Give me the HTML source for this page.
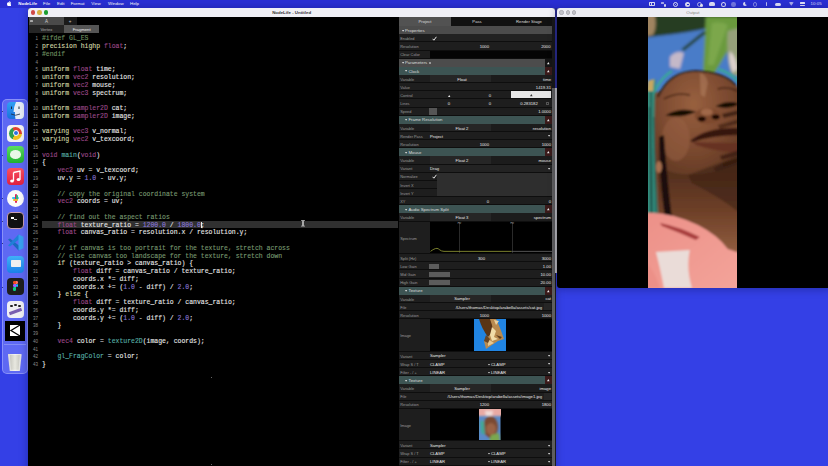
<!DOCTYPE html><html><head><meta charset="utf-8"><style>
*{margin:0;padding:0;box-sizing:border-box}
html,body{width:828px;height:466px;overflow:hidden;background:#3440e6;font-family:"Liberation Sans",sans-serif}
.a{position:absolute}
.t{position:absolute;white-space:pre;line-height:1}
.code{font-family:"Liberation Mono",monospace;font-weight:normal;-webkit-text-stroke:0.12px currentColor}
</style></head><body>
<div class="a" style="left:0;top:0;width:828px;height:7.6px;background:#2a2fd4"></div>
<svg class="a" style="left:7.1px;top:1.3px" width="4.4" height="5.2" viewBox="0 0 17 20"><path fill="#fff" d="M14 10.6c0-2.6 2.1-3.8 2.2-3.9-1.2-1.8-3.1-2-3.7-2-1.6-.2-3.1.9-3.9.9-.8 0-2-.9-3.4-.9C3.5 4.8 1.8 5.8.9 7.4c-1.9 3.2-.5 8 1.3 10.6.9 1.3 2 2.7 3.3 2.7 1.3-.1 1.8-.9 3.4-.9s2 .9 3.4.8c1.4 0 2.3-1.3 3.2-2.6 1-1.5 1.4-2.9 1.4-3-.1 0-2.9-1.1-2.9-4.4zM11.4 3c.7-.9 1.2-2 1.1-3.2-1 0-2.3.7-3 1.6-.7.8-1.2 2-1.1 3.1 1.1.1 2.3-.6 3-1.5z"/></svg>
<div class="t" style="left:18.3px;top:2.3px;font-size:4.4px;color:#fff;font-weight:bold">NodeLife</div>
<div class="t" style="left:43.0px;top:2.3px;font-size:4.4px;color:#fff;font-weight:normal">File</div>
<div class="t" style="left:57.0px;top:2.3px;font-size:4.4px;color:#fff;font-weight:normal">Edit</div>
<div class="t" style="left:70.7px;top:2.3px;font-size:4.4px;color:#fff;font-weight:normal">Format</div>
<div class="t" style="left:91.3px;top:2.3px;font-size:4.4px;color:#fff;font-weight:normal">View</div>
<div class="t" style="left:108.0px;top:2.3px;font-size:4.4px;color:#fff;font-weight:normal">Window</div>
<div class="t" style="left:130.0px;top:2.3px;font-size:4.4px;color:#fff;font-weight:normal">Help</div>
<div class="a" style="left:648.6px;top:2.3px;width:6.5px;height:3.8px;border:0.7px solid rgba(255,255,255,.85);border-radius:0.8px"></div>
<div class="a" style="left:650.5px;top:3.3px;width:1.8px;height:1.8px;background:rgba(255,255,255,.85)"></div>
<div class="a" style="left:661px;top:2.4px;width:2.5px;height:1.8px;background:rgba(255,255,255,.6);border-radius:0.5px"></div>
<div class="a" style="left:663.5px;top:4px;width:2.6px;height:2.6px;background:rgba(255,255,255,.85);border-radius:50%"></div>
<div class="a" style="left:672.8px;top:1.8px;width:5px;height:5px;border:0.9px solid rgba(255,255,255,.85);border-radius:50%"></div>
<div class="a" style="left:674.6px;top:3.6px;width:1.4px;height:1.4px;background:rgba(255,255,255,.85);border-radius:50%"></div>
<div class="a" style="left:685px;top:1.8px;width:5.2px;height:5.2px;background:rgba(255,255,255,.85);border-radius:50%"></div>
<div class="a" style="left:686.8px;top:3.8px;width:1.8px;height:1.2px;background:#2a2fd4"></div>
<div class="a" style="left:697.2px;top:1.8px;width:5px;height:5px;border:0.9px solid rgba(255,255,255,.6);border-radius:50%"></div>
<div class="a" style="left:700.3px;top:4.3px;width:2.4px;height:2.4px;background:rgba(255,255,255,.85);border-radius:50%"></div>
<div class="a" style="left:709.2px;top:2.2px;width:5.6px;height:4px;background:rgba(255,255,255,.85);border-radius:2px 2px 1px 1px"></div>
<div class="a" style="left:720.8px;top:1.8px;width:4.8px;height:5px;border:0.8px solid rgba(255,255,255,.85);border-radius:50%"></div>
<div class="a" style="left:731px;top:2px;width:4.6px;height:4.6px;background:rgba(255,255,255,.35);border-radius:50%"></div>
<div class="a" style="left:743px;top:2px;width:4.4px;height:4.4px;background:rgba(255,255,255,.85);border-radius:50%"></div>
<div class="a" style="left:744.6px;top:1.2px;width:4px;height:4px;background:#2a2fd4;border-radius:50%"></div>
<div class="a" style="left:752.6px;top:2px;width:4.6px;height:4.6px;border:0.8px solid rgba(255,255,255,.4);border-radius:50%"></div>
<div class="a" style="left:766.3px;top:2px;width:1.1px;height:4.2px;background:rgba(255,255,255,.7);border-radius:0.5px"></div>
<div class="a" style="left:775.3px;top:2.6px;width:6px;height:3px;background:rgba(255,255,255,.85);border-radius:1.5px"></div>
<svg class="a" style="left:789px;top:2.2px" width="4.6" height="3.8" viewBox="0 0 10 8"><path d="M0 1 Q5 -1.5 10 1 L5 8 Z" fill="rgba(255,255,255,.6)"/></svg>
<div class="a" style="left:800px;top:2.3px;width:5px;height:1.6px;background:rgba(255,255,255,.85);border-radius:0.5px"></div>
<div class="a" style="left:800px;top:4.6px;width:5px;height:1.6px;background:rgba(255,255,255,.85);border-radius:0.5px"></div>
<div class="t" style="left:810.6px;top:2.2px;font-size:4.4px;color:rgba(255,255,255,.85)">10:05</div>
<div class="a" style="left:1.7px;top:98.5px;width:26px;height:275px;border-radius:5px;background:rgba(135,145,255,.5);border:0.5px solid rgba(190,195,255,.45)"></div>
<div class="a" style="left:7.0px;top:102.0px;width:17.0px;height:17.0px;border-radius:4.0px;background:linear-gradient(#30a0f4,#1a70dc);overflow:hidden;"><svg width="17" height="17" viewBox="0 0 17 17"><path d="M9 0 H17 V17 H8.5 Q7.5 13 8 10 H6.5 Q7 4 9 0 Z" fill="#e6ecf6"/><path d="M4.5 4.5 V7 M12 4.5 V7" stroke="#1a2a40" stroke-width="1"/><path d="M4 12 Q8.5 14.5 13 12" stroke="#1a2a40" stroke-width="0.8" fill="none"/></svg></div>
<div class="a" style="left:7.0px;top:124.5px;width:17.0px;height:17.0px;border-radius:4.0px;background:#f4f4f4;overflow:hidden;"><div class="a" style="left:2px;top:2px;width:13px;height:13px;border-radius:50%;background:conic-gradient(from -30deg,#e04030 0 120deg,#f0c020 120deg 240deg,#30a050 240deg 360deg)"></div><div class="a" style="left:5.5px;top:5.5px;width:6px;height:6px;border-radius:50%;background:#2a70e0;border:1.2px solid #fff"></div></div>
<div class="a" style="left:7.0px;top:146.4px;width:17.0px;height:17.0px;border-radius:4.0px;background:linear-gradient(#5ae060,#20b030);overflow:hidden;"><div class="a" style="left:3px;top:4px;width:11px;height:8.5px;border-radius:50%;background:#e8f8e8"></div></div>
<div class="a" style="left:7.0px;top:168.3px;width:17.0px;height:17.0px;border-radius:4.0px;background:linear-gradient(#fa5060,#e02040);overflow:hidden;"><svg width="17" height="17" viewBox="0 0 17 17"><path d="M6.5 4.5 L13 3 V11.5" stroke="#fff" stroke-width="1.3" fill="none"/><path d="M6.5 4.5 V13" stroke="#fff" stroke-width="1.3"/><ellipse cx="5" cy="13" rx="1.9" ry="1.5" fill="#fff"/><ellipse cx="11.5" cy="11.6" rx="1.9" ry="1.5" fill="#fff"/></svg></div>
<div class="a" style="left:7.0px;top:189.5px;width:17.0px;height:17.0px;border-radius:8.5px;background:#fafafa;overflow:hidden;"><div class="a" style="left:5px;top:7px;width:7px;height:2.2px;background:#36c5f0;border-radius:1px"></div><div class="a" style="left:7.5px;top:4px;width:2.2px;height:9px;background:#e01e5a;border-radius:1px"></div><div class="a" style="left:9px;top:5px;width:2.2px;height:5px;background:#2eb67d;border-radius:1px"></div><div class="a" style="left:5.5px;top:9px;width:5px;height:2px;background:#ecb22e;border-radius:1px"></div></div>
<div class="a" style="left:7.0px;top:212.2px;width:17.0px;height:17.0px;border-radius:4.0px;background:#111;overflow:hidden;border:0.8px solid #c9a0b0"><div class="a" style="left:3px;top:4px;width:2.5px;height:2px;background:#fff"></div><div class="a" style="left:6px;top:6px;width:2.5px;height:1px;background:#ccc"></div></div>
<div class="a" style="left:7.0px;top:234.0px;width:17.0px;height:17.0px;border-radius:4.0px;background:transparent;overflow:hidden;"><svg width="17" height="17" viewBox="0 0 17 17"><path d="M1 5.5 L3 4.5 L12.5 12 V16 L11.5 16.5 Z" fill="#1a6ac0"/><path d="M1 11.5 L3 12.5 L12.5 5 V1 L11.5 0.5 Z" fill="#2080d8"/><path d="M11.5 0.5 L16.5 2.8 V14.2 L11.5 16.5 Z" fill="#38a0f0"/></svg></div>
<div class="a" style="left:7.0px;top:255.5px;width:17.0px;height:17.0px;border-radius:4.0px;background:linear-gradient(#40b0f8,#1a80e8);overflow:hidden;"><div class="a" style="left:3.5px;top:4.5px;width:10px;height:6.5px;background:#f0f0f0;border-radius:0.8px"></div></div>
<div class="a" style="left:7.0px;top:278.0px;width:17.0px;height:17.0px;border-radius:4.0px;background:#1e1e1e;overflow:hidden;"><div class="a" style="left:6px;top:3px;width:2.6px;height:3.2px;background:#f24e1e;border-radius:1.3px 0 0 1.3px"></div><div class="a" style="left:8.6px;top:3px;width:2.6px;height:3.2px;background:#ff7262;border-radius:0 1.3px 1.3px 0"></div><div class="a" style="left:6px;top:6.2px;width:2.6px;height:3.2px;background:#a259ff;border-radius:1.3px 0 0 1.3px"></div><div class="a" style="left:8.6px;top:6.2px;width:2.6px;height:3.2px;background:#1abcfe;border-radius:50%"></div><div class="a" style="left:6px;top:9.4px;width:2.6px;height:3.2px;background:#0acf83;border-radius:1.3px 0 1.3px 1.3px"></div></div>
<div class="a" style="left:7.0px;top:300.5px;width:17.0px;height:17.0px;border-radius:4.0px;background:#f0f0f4;overflow:hidden;"><div class="a" style="left:3px;top:4px;width:2.5px;height:2.5px;border-radius:50%;background:#222"></div><div class="a" style="left:7px;top:3px;width:2.5px;height:2.5px;border-radius:50%;background:#222"></div><div class="a" style="left:11px;top:4px;width:2.5px;height:2.5px;border-radius:50%;background:#222"></div><div class="a" style="left:2px;top:9px;width:13px;height:3px;background:#7a60b0;transform:rotate(-20deg)"></div></div>
<div class="a" style="left:5.0px;top:321.3px;width:20.0px;height:19.3px;border-radius:0.0px;background:#000;overflow:hidden;"><svg width="20" height="19.3" viewBox="0 0 20 19.3"><path d="M5 4 H15 V15 H5 Z" fill="#fff"/><path d="M15 4 L6 9.5 L15 15" stroke="#000" stroke-width="1.3" fill="none"/></svg></div>
<div class="a" style="left:4px;top:344.3px;width:21.5px;height:0.5px;background:rgba(220,225,255,.3)"></div>
<div class="a" style="left:7.3px;top:353.5px;width:15.0px;height:17.5px;border-radius:1.0px;background:transparent;overflow:hidden;"><div class="a" style="left:0.5px;top:0;width:14px;height:17.5px;background:linear-gradient(90deg,#d8d8d8,#f4f4f0 50%,#dcdcdc);clip-path:polygon(0 0,100% 0,86% 100%,14% 100%)"></div><div class="a" style="left:2.5px;top:1.2px;width:10px;height:15px;background:linear-gradient(90deg,#c8c8c0,#e8e8e0 50%,#c8c8c0);clip-path:polygon(0 0,100% 0,88% 100%,12% 100%)"></div></div>
<div class="a" style="left:2.4px;top:110.5px;width:1px;height:1px;border-radius:50%;background:rgba(0,0,40,.8)"></div>
<div class="a" style="left:2.4px;top:155.0px;width:1px;height:1px;border-radius:50%;background:rgba(0,0,40,.8)"></div>
<div class="a" style="left:2.4px;top:198.0px;width:1px;height:1px;border-radius:50%;background:rgba(0,0,40,.8)"></div>
<div class="a" style="left:2.4px;top:221.0px;width:1px;height:1px;border-radius:50%;background:rgba(0,0,40,.8)"></div>
<div class="a" style="left:2.4px;top:243.0px;width:1px;height:1px;border-radius:50%;background:rgba(0,0,40,.8)"></div>
<div class="a" style="left:2.4px;top:287.0px;width:1px;height:1px;border-radius:50%;background:rgba(0,0,40,.8)"></div>
<div class="a" style="left:28px;top:8px;width:527.3px;height:470px;border-radius:3px;background:#000;overflow:hidden;box-shadow:0 1px 8px rgba(0,0,50,.35)">
<div class="a" style="left:0;top:0;width:100%;height:9.1px;background:#f0f0f6"></div>
<div class="a" style="left:2.7px;top:2.4px;width:4.4px;height:4.4px;border-radius:50%;background:#d04a48"></div>
<div class="a" style="left:9.2px;top:2.4px;width:4.4px;height:4.4px;border-radius:50%;background:#d8b040"></div>
<div class="a" style="left:15.6px;top:2.4px;width:4.4px;height:4.4px;border-radius:50%;background:#1c9e30"></div>
<div class="t" style="left:0;width:100%;text-align:center;top:2.6px;font-size:4.4px;color:#333;font-weight:bold">NodeLife - Untitled</div>
</div>
<div class="a" style="left:28.9px;top:17.3px;width:34.8px;height:7.6px;background:#4a4a4a"></div>
<div class="a" style="left:63.7px;top:17.3px;width:13.5px;height:7.6px;background:#1a1a1a"></div>
<div class="a" style="left:28.9px;top:24.9px;width:35px;height:8.5px;background:#252525"></div>
<div class="a" style="left:63.9px;top:24.9px;width:35.5px;height:8.5px;background:#555"></div>
<div class="a" style="left:30.4px;top:19.8px;width:2.6px;height:2.6px;border-radius:0.6px;background:#aaa"></div>
<div class="t" style="left:45px;top:19.8px;font-size:4.5px;color:#ccc">A</div>
<div class="t" style="left:68.7px;top:19.6px;font-size:4.5px;color:#ccc">+</div>
<div class="t" style="left:28.9px;width:35px;text-align:center;top:28px;font-size:4.2px;color:#aaa">Vertex</div>
<div class="t" style="left:63.9px;width:35.5px;text-align:center;top:28px;font-size:4.2px;color:#eee">Fragment</div>
<div class="a" style="left:41.6px;top:220.56px;width:356.4px;height:7.76px;background:#303030"></div>
<div class="a" style="left:200.6px;top:221.76px;width:0.8px;height:6px;background:#eee"></div>
<div class="t" style="left:27.9px;width:10px;text-align:right;top:35.32px;font-size:4.5px;line-height:7.76px;color:#8a8a8a;font-family:'Liberation Sans'">1</div>
<div class="t code" style="left:42px;top:35.32px;font-size:6.46px;line-height:7.76px"><span style="color:#6f9060">#ifdef GL_ES</span></div>
<div class="t" style="left:27.9px;width:10px;text-align:right;top:43.08px;font-size:4.5px;line-height:7.76px;color:#8a8a8a;font-family:'Liberation Sans'">2</div>
<div class="t code" style="left:42px;top:43.08px;font-size:6.46px;line-height:7.76px"><span style="color:#d4d8a8">precision highp </span><span style="color:#9c4888">float</span><span style="color:#e6e6e6">;</span></div>
<div class="t" style="left:27.9px;width:10px;text-align:right;top:50.84px;font-size:4.5px;line-height:7.76px;color:#8a8a8a;font-family:'Liberation Sans'">3</div>
<div class="t code" style="left:42px;top:50.84px;font-size:6.46px;line-height:7.76px"><span style="color:#6f9060">#endif</span></div>
<div class="t" style="left:27.9px;width:10px;text-align:right;top:58.60px;font-size:4.5px;line-height:7.76px;color:#8a8a8a;font-family:'Liberation Sans'">4</div>
<div class="t" style="left:27.9px;width:10px;text-align:right;top:66.36px;font-size:4.5px;line-height:7.76px;color:#8a8a8a;font-family:'Liberation Sans'">5</div>
<div class="t code" style="left:42px;top:66.36px;font-size:6.46px;line-height:7.76px"><span style="color:#d4d8a8">uniform </span><span style="color:#9c4888">float </span><span style="color:#e6e6e6">time;</span></div>
<div class="t" style="left:27.9px;width:10px;text-align:right;top:74.12px;font-size:4.5px;line-height:7.76px;color:#8a8a8a;font-family:'Liberation Sans'">6</div>
<div class="t code" style="left:42px;top:74.12px;font-size:6.46px;line-height:7.76px"><span style="color:#d4d8a8">uniform </span><span style="color:#9c4888">vec2 </span><span style="color:#e6e6e6">resolution;</span></div>
<div class="t" style="left:27.9px;width:10px;text-align:right;top:81.88px;font-size:4.5px;line-height:7.76px;color:#8a8a8a;font-family:'Liberation Sans'">7</div>
<div class="t code" style="left:42px;top:81.88px;font-size:6.46px;line-height:7.76px"><span style="color:#d4d8a8">uniform </span><span style="color:#9c4888">vec2 </span><span style="color:#e6e6e6">mouse;</span></div>
<div class="t" style="left:27.9px;width:10px;text-align:right;top:89.64px;font-size:4.5px;line-height:7.76px;color:#8a8a8a;font-family:'Liberation Sans'">8</div>
<div class="t code" style="left:42px;top:89.64px;font-size:6.46px;line-height:7.76px"><span style="color:#d4d8a8">uniform </span><span style="color:#9c4888">vec3 </span><span style="color:#e6e6e6">spectrum;</span></div>
<div class="t" style="left:27.9px;width:10px;text-align:right;top:97.40px;font-size:4.5px;line-height:7.76px;color:#8a8a8a;font-family:'Liberation Sans'">9</div>
<div class="t" style="left:27.9px;width:10px;text-align:right;top:105.16px;font-size:4.5px;line-height:7.76px;color:#8a8a8a;font-family:'Liberation Sans'">10</div>
<div class="t code" style="left:42px;top:105.16px;font-size:6.46px;line-height:7.76px"><span style="color:#d4d8a8">uniform </span><span style="color:#9c4888">sampler2D </span><span style="color:#e6e6e6">cat;</span></div>
<div class="t" style="left:27.9px;width:10px;text-align:right;top:112.92px;font-size:4.5px;line-height:7.76px;color:#8a8a8a;font-family:'Liberation Sans'">11</div>
<div class="t code" style="left:42px;top:112.92px;font-size:6.46px;line-height:7.76px"><span style="color:#d4d8a8">uniform </span><span style="color:#9c4888">sampler2D </span><span style="color:#e6e6e6">image;</span></div>
<div class="t" style="left:27.9px;width:10px;text-align:right;top:120.68px;font-size:4.5px;line-height:7.76px;color:#8a8a8a;font-family:'Liberation Sans'">12</div>
<div class="t" style="left:27.9px;width:10px;text-align:right;top:128.44px;font-size:4.5px;line-height:7.76px;color:#8a8a8a;font-family:'Liberation Sans'">13</div>
<div class="t code" style="left:42px;top:128.44px;font-size:6.46px;line-height:7.76px"><span style="color:#d4d8a8">varying </span><span style="color:#9c4888">vec3 </span><span style="color:#e6e6e6">v_normal;</span></div>
<div class="t" style="left:27.9px;width:10px;text-align:right;top:136.20px;font-size:4.5px;line-height:7.76px;color:#8a8a8a;font-family:'Liberation Sans'">14</div>
<div class="t code" style="left:42px;top:136.20px;font-size:6.46px;line-height:7.76px"><span style="color:#d4d8a8">varying </span><span style="color:#9c4888">vec2 </span><span style="color:#e6e6e6">v_texcoord;</span></div>
<div class="t" style="left:27.9px;width:10px;text-align:right;top:143.96px;font-size:4.5px;line-height:7.76px;color:#8a8a8a;font-family:'Liberation Sans'">15</div>
<div class="t" style="left:27.9px;width:10px;text-align:right;top:151.72px;font-size:4.5px;line-height:7.76px;color:#8a8a8a;font-family:'Liberation Sans'">16</div>
<div class="t code" style="left:42px;top:151.72px;font-size:6.46px;line-height:7.76px"><span style="color:#9c4888">void </span><span style="color:#58b0a8">main</span><span style="color:#e6e6e6">(</span><span style="color:#9c4888">void</span><span style="color:#e6e6e6">)</span></div>
<div class="t" style="left:27.9px;width:10px;text-align:right;top:159.48px;font-size:4.5px;line-height:7.76px;color:#8a8a8a;font-family:'Liberation Sans'">17</div>
<div class="t code" style="left:42px;top:159.48px;font-size:6.46px;line-height:7.76px"><span style="color:#e6e6e6">{</span></div>
<div class="t" style="left:27.9px;width:10px;text-align:right;top:167.24px;font-size:4.5px;line-height:7.76px;color:#8a8a8a;font-family:'Liberation Sans'">18</div>
<div class="t code" style="left:42px;top:167.24px;font-size:6.46px;line-height:7.76px"><span style="color:#e6e6e6">    </span><span style="color:#9c4888">vec2 </span><span style="color:#e6e6e6">uv = v_texcoord;</span></div>
<div class="t" style="left:27.9px;width:10px;text-align:right;top:175.00px;font-size:4.5px;line-height:7.76px;color:#8a8a8a;font-family:'Liberation Sans'">19</div>
<div class="t code" style="left:42px;top:175.00px;font-size:6.46px;line-height:7.76px"><span style="color:#e6e6e6">    uv.y = </span><span style="color:#8a78d8">1.0</span><span style="color:#e6e6e6"> - uv.y;</span></div>
<div class="t" style="left:27.9px;width:10px;text-align:right;top:182.76px;font-size:4.5px;line-height:7.76px;color:#8a8a8a;font-family:'Liberation Sans'">20</div>
<div class="t" style="left:27.9px;width:10px;text-align:right;top:190.52px;font-size:4.5px;line-height:7.76px;color:#8a8a8a;font-family:'Liberation Sans'">21</div>
<div class="t code" style="left:42px;top:190.52px;font-size:6.46px;line-height:7.76px"><span style="color:#789a70">    // copy the original coordinate system</span></div>
<div class="t" style="left:27.9px;width:10px;text-align:right;top:198.28px;font-size:4.5px;line-height:7.76px;color:#8a8a8a;font-family:'Liberation Sans'">22</div>
<div class="t code" style="left:42px;top:198.28px;font-size:6.46px;line-height:7.76px"><span style="color:#e6e6e6">    </span><span style="color:#9c4888">vec2 </span><span style="color:#e6e6e6">coords = uv;</span></div>
<div class="t" style="left:27.9px;width:10px;text-align:right;top:206.04px;font-size:4.5px;line-height:7.76px;color:#8a8a8a;font-family:'Liberation Sans'">23</div>
<div class="t" style="left:27.9px;width:10px;text-align:right;top:213.80px;font-size:4.5px;line-height:7.76px;color:#8a8a8a;font-family:'Liberation Sans'">24</div>
<div class="t code" style="left:42px;top:213.80px;font-size:6.46px;line-height:7.76px"><span style="color:#789a70">    // find out the aspect ratios</span></div>
<div class="t" style="left:27.9px;width:10px;text-align:right;top:221.56px;font-size:4.5px;line-height:7.76px;color:#8a8a8a;font-family:'Liberation Sans'">25</div>
<div class="t code" style="left:42px;top:221.56px;font-size:6.46px;line-height:7.76px"><span style="color:#e6e6e6">    </span><span style="color:#9c4888">float </span><span style="color:#e6e6e6">texture_ratio = </span><span style="color:#8a78d8">1200.0</span><span style="color:#e6e6e6"> / </span><span style="color:#8a78d8">1800.0</span><span style="color:#e6e6e6">;</span></div>
<div class="t" style="left:27.9px;width:10px;text-align:right;top:229.32px;font-size:4.5px;line-height:7.76px;color:#8a8a8a;font-family:'Liberation Sans'">26</div>
<div class="t code" style="left:42px;top:229.32px;font-size:6.46px;line-height:7.76px"><span style="color:#e6e6e6">    </span><span style="color:#9c4888">float </span><span style="color:#e6e6e6">canvas_ratio = resolution.x / resolution.y;</span></div>
<div class="t" style="left:27.9px;width:10px;text-align:right;top:237.08px;font-size:4.5px;line-height:7.76px;color:#8a8a8a;font-family:'Liberation Sans'">27</div>
<div class="t" style="left:27.9px;width:10px;text-align:right;top:244.84px;font-size:4.5px;line-height:7.76px;color:#8a8a8a;font-family:'Liberation Sans'">28</div>
<div class="t code" style="left:42px;top:244.84px;font-size:6.46px;line-height:7.76px"><span style="color:#789a70">    // if canvas is too portrait for the texture, stretch across</span></div>
<div class="t" style="left:27.9px;width:10px;text-align:right;top:252.60px;font-size:4.5px;line-height:7.76px;color:#8a8a8a;font-family:'Liberation Sans'">29</div>
<div class="t code" style="left:42px;top:252.60px;font-size:6.46px;line-height:7.76px"><span style="color:#789a70">    // else canvas too landscape for the texture, stretch down</span></div>
<div class="t" style="left:27.9px;width:10px;text-align:right;top:260.36px;font-size:4.5px;line-height:7.76px;color:#8a8a8a;font-family:'Liberation Sans'">30</div>
<div class="t code" style="left:42px;top:260.36px;font-size:6.46px;line-height:7.76px"><span style="color:#e6e6e6">    </span><span style="color:#d4d8a8">if </span><span style="color:#e6e6e6">(texture_ratio &gt; canvas_ratio) {</span></div>
<div class="t" style="left:27.9px;width:10px;text-align:right;top:268.12px;font-size:4.5px;line-height:7.76px;color:#8a8a8a;font-family:'Liberation Sans'">31</div>
<div class="t code" style="left:42px;top:268.12px;font-size:6.46px;line-height:7.76px"><span style="color:#e6e6e6">        </span><span style="color:#9c4888">float </span><span style="color:#e6e6e6">diff = canvas_ratio / texture_ratio;</span></div>
<div class="t" style="left:27.9px;width:10px;text-align:right;top:275.88px;font-size:4.5px;line-height:7.76px;color:#8a8a8a;font-family:'Liberation Sans'">32</div>
<div class="t code" style="left:42px;top:275.88px;font-size:6.46px;line-height:7.76px"><span style="color:#e6e6e6">        coords.x *= diff;</span></div>
<div class="t" style="left:27.9px;width:10px;text-align:right;top:283.64px;font-size:4.5px;line-height:7.76px;color:#8a8a8a;font-family:'Liberation Sans'">33</div>
<div class="t code" style="left:42px;top:283.64px;font-size:6.46px;line-height:7.76px"><span style="color:#e6e6e6">        coords.x += (</span><span style="color:#8a78d8">1.0</span><span style="color:#e6e6e6"> - diff) / </span><span style="color:#8a78d8">2.0</span><span style="color:#e6e6e6">;</span></div>
<div class="t" style="left:27.9px;width:10px;text-align:right;top:291.40px;font-size:4.5px;line-height:7.76px;color:#8a8a8a;font-family:'Liberation Sans'">34</div>
<div class="t code" style="left:42px;top:291.40px;font-size:6.46px;line-height:7.76px"><span style="color:#e6e6e6">    } </span><span style="color:#d4d8a8">else</span><span style="color:#e6e6e6"> {</span></div>
<div class="t" style="left:27.9px;width:10px;text-align:right;top:299.16px;font-size:4.5px;line-height:7.76px;color:#8a8a8a;font-family:'Liberation Sans'">35</div>
<div class="t code" style="left:42px;top:299.16px;font-size:6.46px;line-height:7.76px"><span style="color:#e6e6e6">        </span><span style="color:#9c4888">float </span><span style="color:#e6e6e6">diff = texture_ratio / canvas_ratio;</span></div>
<div class="t" style="left:27.9px;width:10px;text-align:right;top:306.92px;font-size:4.5px;line-height:7.76px;color:#8a8a8a;font-family:'Liberation Sans'">36</div>
<div class="t code" style="left:42px;top:306.92px;font-size:6.46px;line-height:7.76px"><span style="color:#e6e6e6">        coords.y *= diff;</span></div>
<div class="t" style="left:27.9px;width:10px;text-align:right;top:314.68px;font-size:4.5px;line-height:7.76px;color:#8a8a8a;font-family:'Liberation Sans'">37</div>
<div class="t code" style="left:42px;top:314.68px;font-size:6.46px;line-height:7.76px"><span style="color:#e6e6e6">        coords.y += (</span><span style="color:#8a78d8">1.0</span><span style="color:#e6e6e6"> - diff) / </span><span style="color:#8a78d8">2.0</span><span style="color:#e6e6e6">;</span></div>
<div class="t" style="left:27.9px;width:10px;text-align:right;top:322.44px;font-size:4.5px;line-height:7.76px;color:#8a8a8a;font-family:'Liberation Sans'">38</div>
<div class="t code" style="left:42px;top:322.44px;font-size:6.46px;line-height:7.76px"><span style="color:#e6e6e6">    }</span></div>
<div class="t" style="left:27.9px;width:10px;text-align:right;top:330.20px;font-size:4.5px;line-height:7.76px;color:#8a8a8a;font-family:'Liberation Sans'">39</div>
<div class="t" style="left:27.9px;width:10px;text-align:right;top:337.96px;font-size:4.5px;line-height:7.76px;color:#8a8a8a;font-family:'Liberation Sans'">40</div>
<div class="t code" style="left:42px;top:337.96px;font-size:6.46px;line-height:7.76px"><span style="color:#e6e6e6">    </span><span style="color:#9c4888">vec4 </span><span style="color:#e6e6e6">color = </span><span style="color:#58b0a8">texture2D</span><span style="color:#e6e6e6">(image, coords);</span></div>
<div class="t" style="left:27.9px;width:10px;text-align:right;top:345.72px;font-size:4.5px;line-height:7.76px;color:#8a8a8a;font-family:'Liberation Sans'">41</div>
<div class="t" style="left:27.9px;width:10px;text-align:right;top:353.48px;font-size:4.5px;line-height:7.76px;color:#8a8a8a;font-family:'Liberation Sans'">42</div>
<div class="t code" style="left:42px;top:353.48px;font-size:6.46px;line-height:7.76px"><span style="color:#e6e6e6">    </span><span style="color:#58b0a8">gl_FragColor</span><span style="color:#e6e6e6"> = color;</span></div>
<div class="t" style="left:27.9px;width:10px;text-align:right;top:361.24px;font-size:4.5px;line-height:7.76px;color:#8a8a8a;font-family:'Liberation Sans'">43</div>
<div class="t code" style="left:42px;top:361.24px;font-size:6.46px;line-height:7.76px"><span style="color:#e6e6e6">}</span></div>
<div class="a" style="left:210.5px;top:376.5px;width:1px;height:1px;background:#666"></div>
<div class="a" style="left:210.5px;top:463.5px;width:1px;height:1px;background:#666"></div>
<svg class="a" style="left:301.2px;top:220.4px" width="4" height="6.6" viewBox="0 0 4 6.6"><path d="M0.3 0.5 H1.4 Q2 0.5 2 1.2 V5.4 Q2 6.1 1.4 6.1 H0.3 M3.7 0.5 H2.6 Q2 0.5 2 1.2 V5.4 Q2 6.1 2.6 6.1 H3.7" stroke="#ddd" stroke-width="0.9" fill="none"/></svg>
<div class="a" style="left:398px;top:17.1px;width:1px;height:450px;background:#000"></div>
<div class="a" style="left:399.0px;top:17.1px;width:156.5px;height:450px;background:#1c1c1c"></div>
<div class="a" style="left:551.7px;top:17.1px;width:3.6px;height:71px;background:#181818"></div>
<div class="a" style="left:551.7px;top:88px;width:3.6px;height:380px;background:#5e5e5e"></div>
<div class="a" style="left:555.3px;top:8px;width:2.2px;height:80px;background:#2a2c8a"></div>
<div class="a" style="left:555.3px;top:88px;width:2.1px;height:185px;background:#b8b8b8"></div>
<div class="a" style="left:399px;top:17.3px;width:52px;height:8.3px;background:#525252"></div>
<div class="a" style="left:451px;top:17.3px;width:100.5px;height:8.3px;background:#111"></div>
<div class="t" style="left:400.0px;width:50px;text-align:center;top:19.9px;font-size:4.2px;color:#ddd">Project</div>
<div class="t" style="left:452.0px;width:50px;text-align:center;top:19.9px;font-size:4.2px;color:#ddd">Pass</div>
<div class="t" style="left:504.0px;width:50px;text-align:center;top:19.9px;font-size:4.2px;color:#ddd">Render Stage</div>
<div class="a" style="left:399.0px;top:26.10px;width:152.5px;height:8.14px;background:#4c4c4c"></div>
<svg class="a" style="left:401.60px;top:29.77px;overflow:visible" width="3.20" height="2.80"><polygon points="0,0 2.20,0 1.10,1.80" fill="#ddd"/></svg>
<div class="t" style="left:405.0px;top:28.82px;font-size:4.3px;color:#ddd">Properties</div>
<div class="a" style="left:399.0px;top:34.24px;width:31.0px;height:8.14px;background:#1e1e1e"></div>
<div class="t" style="left:400.2px;top:37.11px;font-size:3.9px;color:#9a9a9a;line-height:1">Enabled</div>
<div class="a" style="left:430.0px;top:34.24px;width:121.5px;height:8.14px;background:#222"></div>
<svg class="a" style="left:432px;top:35.84px" width="5" height="5" viewBox="0 0 5 5"><path d="M0.6 2.8 L1.9 4.2 L4.4 0.8" stroke="#fff" stroke-width="0.9" fill="none"/></svg>
<div class="a" style="left:399.0px;top:42.38px;width:31.0px;height:8.14px;background:#1e1e1e"></div>
<div class="t" style="left:400.2px;top:45.25px;font-size:3.9px;color:#9a9a9a;line-height:1">Resolution</div>
<div class="a" style="left:430.0px;top:42.38px;width:121.5px;height:8.14px;background:#1e1e1e"></div>
<div class="t" style="left:449.0px;width:40px;text-align:right;top:45.15px;font-size:4.2px;color:#e8e8e8">1000</div>
<div class="t" style="left:510.5px;width:40px;text-align:right;top:45.15px;font-size:4.2px;color:#e8e8e8">2000</div>
<div class="a" style="left:399.0px;top:50.52px;width:31.0px;height:8.14px;background:#1e1e1e"></div>
<div class="t" style="left:400.2px;top:53.39px;font-size:3.9px;color:#9a9a9a;line-height:1">Clear Color</div>
<div class="a" style="left:430.0px;top:50.52px;width:121.5px;height:8.14px;background:#050505"></div>
<div class="a" style="left:399.0px;top:58.66px;width:146.0px;height:8.14px;background:#4c4c4c"></div>
<svg class="a" style="left:401.60px;top:62.33px;overflow:visible" width="3.20" height="2.80"><polygon points="0,0 2.20,0 1.10,1.80" fill="#ddd"/></svg>
<div class="t" style="left:405.0px;top:61.38px;font-size:4.3px;color:#ddd">Parameters</div>
<div class="a" style="left:545px;top:58.66px;width:6.5px;height:8.14px;background:#151515"></div>
<svg class="a" style="left:546.90px;top:61.93px;overflow:visible" width="3.60" height="3.20"><polygon points="1.30,0 2.60,2.20 0,2.20" fill="#e8e8e8"/></svg>
<div class="a" style="left:428.6px;top:61.56px;width:2.6px;height:2.6px;border:0.5px solid #999"></div>
<div class="a" style="left:399.0px;top:66.80px;width:146.0px;height:8.14px;background:#3d5453"></div>
<svg class="a" style="left:405.10px;top:70.47px;overflow:visible" width="3.20" height="2.80"><polygon points="0,0 2.20,0 1.10,1.80" fill="#ddd"/></svg>
<div class="t" style="left:408.5px;top:69.52px;font-size:4.3px;color:#ddd">Clock</div>
<div class="a" style="left:545px;top:66.80px;width:6.5px;height:8.14px;background:#3a1a1a"></div>
<svg class="a" style="left:546.90px;top:70.07px;overflow:visible" width="3.60" height="3.20"><polygon points="1.30,0 2.60,2.20 0,2.20" fill="#e8e8e8"/></svg>
<div class="a" style="left:399.0px;top:74.94px;width:31.0px;height:8.14px;background:#1e1e1e"></div>
<div class="t" style="left:400.2px;top:77.81px;font-size:3.9px;color:#9a9a9a;line-height:1">Variable</div>
<div class="a" style="left:430.0px;top:74.94px;width:61.0px;height:8.14px;background:#262626"></div>
<div class="a" style="left:491.0px;top:74.94px;width:60.5px;height:8.14px;background:#1c1c1c"></div>
<div class="t" style="left:442.0px;width:40px;text-align:center;top:77.71px;font-size:4.2px;color:#e8e8e8">Float</div>
<div class="t" style="left:511.0px;width:40px;text-align:right;top:77.71px;font-size:4.2px;color:#e8e8e8">time</div>
<div class="a" style="left:399.0px;top:83.08px;width:31.0px;height:8.14px;background:#1e1e1e"></div>
<div class="t" style="left:400.2px;top:85.95px;font-size:3.9px;color:#9a9a9a;line-height:1">Value</div>
<div class="a" style="left:430.0px;top:83.08px;width:121.5px;height:8.14px;background:#1e1e1e"></div>
<div class="t" style="left:511.0px;width:40px;text-align:right;top:85.85px;font-size:4.2px;color:#e8e8e8">1419.31</div>
<div class="a" style="left:399.0px;top:91.22px;width:31.0px;height:8.14px;background:#1e1e1e"></div>
<div class="t" style="left:400.2px;top:94.09px;font-size:3.9px;color:#9a9a9a;line-height:1">Control</div>
<div class="a" style="left:430.0px;top:91.22px;width:121.5px;height:8.14px;background:#1e1e1e"></div>
<svg class="a" style="left:447.80px;top:94.59px;overflow:visible" width="3.40" height="3.00"><polygon points="1.20,0 2.40,2.00 0,2.00" fill="#eee"/></svg>
<div class="t" style="left:485.0px;width:10px;text-align:center;top:93.99px;font-size:4.2px;color:#e8e8e8">0</div>
<div class="a" style="left:511.0px;top:91.22px;width:40.0px;height:8.14px;background:#e6e6e6"></div>
<svg class="a" style="left:529.70px;top:94.49px;overflow:visible" width="3.60" height="3.20"><polygon points="1.30,0 2.60,2.20 0,2.20" fill="#333"/></svg>
<div class="a" style="left:399.0px;top:99.36px;width:31.0px;height:8.14px;background:#1e1e1e"></div>
<div class="t" style="left:400.2px;top:102.23px;font-size:3.9px;color:#9a9a9a;line-height:1">Lines</div>
<div class="a" style="left:430.0px;top:99.36px;width:121.5px;height:8.14px;background:#1e1e1e"></div>
<div class="t" style="left:444.0px;width:10px;text-align:center;top:102.13px;font-size:4.2px;color:#e8e8e8">0</div>
<div class="t" style="left:485.0px;width:10px;text-align:center;top:102.13px;font-size:4.2px;color:#e8e8e8">0</div>
<div class="t" style="left:509.0px;width:40px;text-align:center;top:102.13px;font-size:4.2px;color:#e8e8e8">0.283182</div>
<div class="a" style="left:546px;top:101.96px;width:3px;height:3px;border:0.5px solid #555"></div>
<div class="a" style="left:399.0px;top:107.50px;width:31.0px;height:8.14px;background:#1e1e1e"></div>
<div class="t" style="left:400.2px;top:110.37px;font-size:3.9px;color:#9a9a9a;line-height:1">Speed</div>
<div class="a" style="left:430.0px;top:107.50px;width:121.5px;height:8.14px;background:#1e1e1e"></div>
<div class="a" style="left:429px;top:108.10px;width:7.6px;height:6.6px;background:#555"></div>
<div class="t" style="left:511.0px;width:40px;text-align:right;top:110.27px;font-size:4.2px;color:#e8e8e8">1.0000</div>
<div class="a" style="left:399.0px;top:115.64px;width:146.0px;height:8.14px;background:#3d5453"></div>
<svg class="a" style="left:405.10px;top:119.31px;overflow:visible" width="3.20" height="2.80"><polygon points="0,0 2.20,0 1.10,1.80" fill="#ddd"/></svg>
<div class="t" style="left:408.5px;top:118.36px;font-size:4.3px;color:#ddd">Frame Resolution</div>
<div class="a" style="left:545px;top:115.64px;width:6.5px;height:8.14px;background:#3a1a1a"></div>
<svg class="a" style="left:546.90px;top:118.91px;overflow:visible" width="3.60" height="3.20"><polygon points="1.30,0 2.60,2.20 0,2.20" fill="#e8e8e8"/></svg>
<div class="a" style="left:399.0px;top:123.78px;width:31.0px;height:8.14px;background:#1e1e1e"></div>
<div class="t" style="left:400.2px;top:126.65px;font-size:3.9px;color:#9a9a9a;line-height:1">Variable</div>
<div class="a" style="left:430.0px;top:123.78px;width:61.0px;height:8.14px;background:#262626"></div>
<div class="a" style="left:491.0px;top:123.78px;width:60.5px;height:8.14px;background:#1c1c1c"></div>
<div class="t" style="left:442.0px;width:40px;text-align:center;top:126.55px;font-size:4.2px;color:#e8e8e8">Float 2</div>
<div class="t" style="left:511.0px;width:40px;text-align:right;top:126.55px;font-size:4.2px;color:#e8e8e8">resolution</div>
<div class="a" style="left:399.0px;top:131.92px;width:31.0px;height:8.14px;background:#1e1e1e"></div>
<div class="t" style="left:400.2px;top:134.79px;font-size:3.9px;color:#9a9a9a;line-height:1">Render Pass</div>
<div class="a" style="left:430.0px;top:131.92px;width:121.5px;height:8.14px;background:#1e1e1e"></div>
<div class="t" style="left:430.0px;top:134.69px;font-size:4.2px;color:#e8e8e8">Project</div>
<svg class="a" style="left:548.40px;top:135.49px;overflow:visible" width="3.20" height="2.80"><polygon points="0,0 2.20,0 1.10,1.80" fill="#ddd"/></svg>
<div class="a" style="left:399.0px;top:140.06px;width:31.0px;height:8.14px;background:#1e1e1e"></div>
<div class="t" style="left:400.2px;top:142.93px;font-size:3.9px;color:#9a9a9a;line-height:1">Resolution</div>
<div class="a" style="left:430.0px;top:140.06px;width:121.5px;height:8.14px;background:#1e1e1e"></div>
<div class="t" style="left:449.0px;width:40px;text-align:right;top:142.83px;font-size:4.2px;color:#e8e8e8">1000</div>
<div class="t" style="left:511.0px;width:40px;text-align:right;top:142.83px;font-size:4.2px;color:#e8e8e8">1000</div>
<div class="a" style="left:399.0px;top:148.20px;width:146.0px;height:8.14px;background:#3d5453"></div>
<svg class="a" style="left:405.10px;top:151.87px;overflow:visible" width="3.20" height="2.80"><polygon points="0,0 2.20,0 1.10,1.80" fill="#ddd"/></svg>
<div class="t" style="left:408.5px;top:150.92px;font-size:4.3px;color:#ddd">Mouse</div>
<div class="a" style="left:545px;top:148.20px;width:6.5px;height:8.14px;background:#3a1a1a"></div>
<svg class="a" style="left:546.90px;top:151.47px;overflow:visible" width="3.60" height="3.20"><polygon points="1.30,0 2.60,2.20 0,2.20" fill="#e8e8e8"/></svg>
<div class="a" style="left:399.0px;top:156.34px;width:31.0px;height:8.14px;background:#1e1e1e"></div>
<div class="t" style="left:400.2px;top:159.21px;font-size:3.9px;color:#9a9a9a;line-height:1">Variable</div>
<div class="a" style="left:430.0px;top:156.34px;width:61.0px;height:8.14px;background:#262626"></div>
<div class="a" style="left:491.0px;top:156.34px;width:60.5px;height:8.14px;background:#1c1c1c"></div>
<div class="t" style="left:442.0px;width:40px;text-align:center;top:159.11px;font-size:4.2px;color:#e8e8e8">Float 2</div>
<div class="t" style="left:511.0px;width:40px;text-align:right;top:159.11px;font-size:4.2px;color:#e8e8e8">mouse</div>
<div class="a" style="left:399.0px;top:164.48px;width:31.0px;height:8.14px;background:#1e1e1e"></div>
<div class="t" style="left:400.2px;top:167.35px;font-size:3.9px;color:#9a9a9a;line-height:1">Variant</div>
<div class="a" style="left:430.0px;top:164.48px;width:121.5px;height:8.14px;background:#232323"></div>
<div class="t" style="left:430.0px;top:167.25px;font-size:4.2px;color:#e8e8e8">Drag</div>
<svg class="a" style="left:548.40px;top:168.05px;overflow:visible" width="3.20" height="2.80"><polygon points="0,0 2.20,0 1.10,1.80" fill="#ddd"/></svg>
<div class="a" style="left:399.0px;top:172.62px;width:31.0px;height:8.14px;background:#1e1e1e"></div>
<div class="t" style="left:400.2px;top:175.49px;font-size:3.9px;color:#9a9a9a;line-height:1">Normalize</div>
<div class="a" style="left:430.0px;top:172.62px;width:121.5px;height:8.14px;background:#1e1e1e"></div>
<svg class="a" style="left:432px;top:174.22px" width="5" height="5" viewBox="0 0 5 5"><path d="M0.6 2.8 L1.9 4.2 L4.4 0.8" stroke="#fff" stroke-width="0.9" fill="none"/></svg>
<div class="a" style="left:399.0px;top:180.76px;width:31.0px;height:8.14px;background:#1e1e1e"></div>
<div class="t" style="left:400.2px;top:183.63px;font-size:3.9px;color:#9a9a9a;line-height:1">Invert X</div>
<div class="a" style="left:430.0px;top:180.76px;width:121.5px;height:8.14px;background:#1e1e1e"></div>
<div class="a" style="left:399.0px;top:188.90px;width:31.0px;height:8.14px;background:#1e1e1e"></div>
<div class="t" style="left:400.2px;top:191.77px;font-size:3.9px;color:#9a9a9a;line-height:1">Invert Y</div>
<div class="a" style="left:430.0px;top:188.90px;width:121.5px;height:8.14px;background:#1e1e1e"></div>
<div class="a" style="left:399.0px;top:197.04px;width:31.0px;height:8.14px;background:#1e1e1e"></div>
<div class="t" style="left:400.2px;top:199.91px;font-size:3.9px;color:#9a9a9a;line-height:1">XY</div>
<div class="a" style="left:430.0px;top:197.04px;width:121.5px;height:8.14px;background:#1e1e1e"></div>
<div class="t" style="left:449.0px;width:40px;text-align:right;top:199.81px;font-size:4.2px;color:#e8e8e8">0</div>
<div class="t" style="left:511.0px;width:40px;text-align:right;top:199.81px;font-size:4.2px;color:#e8e8e8">0</div>
<div class="a" style="left:399.0px;top:205.18px;width:146.0px;height:8.14px;background:#3d5453"></div>
<svg class="a" style="left:405.10px;top:208.85px;overflow:visible" width="3.20" height="2.80"><polygon points="0,0 2.20,0 1.10,1.80" fill="#ddd"/></svg>
<div class="t" style="left:408.5px;top:207.90px;font-size:4.3px;color:#ddd">Audio Spectrum Split</div>
<div class="a" style="left:545px;top:205.18px;width:6.5px;height:8.14px;background:#3a1a1a"></div>
<svg class="a" style="left:546.90px;top:208.45px;overflow:visible" width="3.60" height="3.20"><polygon points="1.30,0 2.60,2.20 0,2.20" fill="#e8e8e8"/></svg>
<div class="a" style="left:399.0px;top:213.32px;width:31.0px;height:8.14px;background:#1e1e1e"></div>
<div class="t" style="left:400.2px;top:216.19px;font-size:3.9px;color:#9a9a9a;line-height:1">Variable</div>
<div class="a" style="left:430.0px;top:213.32px;width:61.0px;height:8.14px;background:#262626"></div>
<div class="a" style="left:491.0px;top:213.32px;width:60.5px;height:8.14px;background:#1c1c1c"></div>
<div class="t" style="left:442.0px;width:40px;text-align:center;top:216.09px;font-size:4.2px;color:#e8e8e8">Float 3</div>
<div class="t" style="left:511.0px;width:40px;text-align:right;top:216.09px;font-size:4.2px;color:#e8e8e8">spectrum</div>
<div class="a" style="left:399.0px;top:221.46px;width:31.0px;height:32.56px;background:#1e1e1e"></div>
<div class="t" style="left:400.2px;top:236.54px;font-size:3.9px;color:#9a9a9a;line-height:1">Spectrum</div>
<div class="a" style="left:430.0px;top:221.46px;width:121.5px;height:32.56px;background:#000"></div>
<div class="a" style="left:458.7px;top:222.46px;width:0.7px;height:30.56px;background:#2a2a2a"></div>
<div class="a" style="left:511.5px;top:222.46px;width:0.7px;height:30.56px;background:#2a2a2a"></div>
<div class="t" style="left:457.5px;top:222.06px;font-size:3px;color:#999">Hz</div>
<div class="t" style="left:510.3px;top:222.06px;font-size:3px;color:#999">Hz</div>
<svg class="a" style="left:430px;top:221.46px" width="122" height="32.56"><path d="M0.5 30.36 C 3 28.56, 5 27.36, 7 27.36 S 10 30.36, 14 30.36 L 81.5 30.36" stroke="#98a038" stroke-width="0.8" fill="none"/><path d="M81.5 30.36 L 122 30.36" stroke="#6a6a6a" stroke-width="0.8" fill="none"/></svg>
<div class="a" style="left:399.0px;top:254.02px;width:31.0px;height:8.14px;background:#1e1e1e"></div>
<div class="t" style="left:400.2px;top:256.89px;font-size:3.9px;color:#9a9a9a;line-height:1">Split (Hz)</div>
<div class="a" style="left:430.0px;top:254.02px;width:121.5px;height:8.14px;background:#1e1e1e"></div>
<div class="t" style="left:445.0px;width:40px;text-align:right;top:256.79px;font-size:4.2px;color:#e8e8e8">300</div>
<div class="t" style="left:511.0px;width:40px;text-align:right;top:256.79px;font-size:4.2px;color:#e8e8e8">3000</div>
<div class="a" style="left:399.0px;top:262.16px;width:31.0px;height:8.14px;background:#1e1e1e"></div>
<div class="t" style="left:400.2px;top:265.03px;font-size:3.9px;color:#9a9a9a;line-height:1">Low Gain</div>
<div class="a" style="left:430.0px;top:262.16px;width:121.5px;height:8.14px;background:#1e1e1e"></div>
<div class="a" style="left:429.3px;top:263.76px;width:9.7px;height:5.3px;background:#5c5c5c"></div>
<div class="t" style="left:511.0px;width:40px;text-align:right;top:264.93px;font-size:4.2px;color:#e8e8e8">1.00</div>
<div class="a" style="left:399.0px;top:270.30px;width:31.0px;height:8.14px;background:#1e1e1e"></div>
<div class="t" style="left:400.2px;top:273.17px;font-size:3.9px;color:#9a9a9a;line-height:1">Mid Gain</div>
<div class="a" style="left:430.0px;top:270.30px;width:121.5px;height:8.14px;background:#1e1e1e"></div>
<div class="a" style="left:429.3px;top:271.90px;width:20.3px;height:5.3px;background:#5c5c5c"></div>
<div class="t" style="left:511.0px;width:40px;text-align:right;top:273.07px;font-size:4.2px;color:#e8e8e8">10.00</div>
<div class="a" style="left:399.0px;top:278.44px;width:31.0px;height:8.14px;background:#1e1e1e"></div>
<div class="t" style="left:400.2px;top:281.31px;font-size:3.9px;color:#9a9a9a;line-height:1">High Gain</div>
<div class="a" style="left:430.0px;top:278.44px;width:121.5px;height:8.14px;background:#1e1e1e"></div>
<div class="a" style="left:429.3px;top:280.04px;width:20.3px;height:5.3px;background:#5c5c5c"></div>
<div class="t" style="left:511.0px;width:40px;text-align:right;top:281.21px;font-size:4.2px;color:#e8e8e8">20.00</div>
<div class="a" style="left:399.0px;top:286.58px;width:146.0px;height:8.14px;background:#3d5453"></div>
<svg class="a" style="left:405.10px;top:290.25px;overflow:visible" width="3.20" height="2.80"><polygon points="0,0 2.20,0 1.10,1.80" fill="#ddd"/></svg>
<div class="t" style="left:408.5px;top:289.30px;font-size:4.3px;color:#ddd">Texture</div>
<div class="a" style="left:545px;top:286.58px;width:6.5px;height:8.14px;background:#3a1a1a"></div>
<svg class="a" style="left:546.90px;top:289.85px;overflow:visible" width="3.60" height="3.20"><polygon points="1.30,0 2.60,2.20 0,2.20" fill="#e8e8e8"/></svg>
<div class="a" style="left:399.0px;top:294.72px;width:31.0px;height:8.14px;background:#1e1e1e"></div>
<div class="t" style="left:400.2px;top:297.59px;font-size:3.9px;color:#9a9a9a;line-height:1">Variable</div>
<div class="a" style="left:430.0px;top:294.72px;width:61.0px;height:8.14px;background:#262626"></div>
<div class="a" style="left:491.0px;top:294.72px;width:60.5px;height:8.14px;background:#1c1c1c"></div>
<div class="t" style="left:442.0px;width:40px;text-align:center;top:297.49px;font-size:4.2px;color:#e8e8e8">Sampler</div>
<div class="t" style="left:511.0px;width:40px;text-align:right;top:297.49px;font-size:4.2px;color:#e8e8e8">cat</div>
<div class="a" style="left:399.0px;top:302.86px;width:31.0px;height:8.14px;background:#1e1e1e"></div>
<div class="t" style="left:400.2px;top:305.73px;font-size:3.9px;color:#9a9a9a;line-height:1">File</div>
<div class="a" style="left:430.0px;top:302.86px;width:121.5px;height:8.14px;background:#1e1e1e"></div>
<div class="t" style="left:422.0px;width:120px;text-align:right;top:305.63px;font-size:4.2px;color:#e8e8e8">/Users/thomas/Desktop/arabella/assets/cat.jpg</div>
<div class="a" style="left:544.0px;top:302.86px;width:7.0px;height:8.14px;background:#262626"></div>
<div class="a" style="left:399.0px;top:311.00px;width:31.0px;height:8.14px;background:#1e1e1e"></div>
<div class="t" style="left:400.2px;top:313.87px;font-size:3.9px;color:#9a9a9a;line-height:1">Resolution</div>
<div class="a" style="left:430.0px;top:311.00px;width:121.5px;height:8.14px;background:#1e1e1e"></div>
<div class="t" style="left:449.0px;width:40px;text-align:right;top:313.77px;font-size:4.2px;color:#e8e8e8">1000</div>
<div class="t" style="left:511.0px;width:40px;text-align:right;top:313.77px;font-size:4.2px;color:#e8e8e8">1000</div>
<div class="a" style="left:399.0px;top:319.14px;width:31.0px;height:32.56px;background:#1e1e1e"></div>
<div class="t" style="left:400.2px;top:334.22px;font-size:3.9px;color:#9a9a9a;line-height:1">Image</div>
<div class="a" style="left:430.0px;top:319.14px;width:121.5px;height:32.56px;background:#000"></div>
<svg class="a" style="left:474px;top:319.14px" width="32" height="32.2" viewBox="0 0 32 32.2"><defs><filter id="cb" x="-20%" y="-20%" width="140%" height="140%"><feGaussianBlur stdDeviation="0.6"/></filter></defs><rect width="32" height="32.2" fill="#2184e2"/><g filter="url(#cb)"><path d="M5 0 H22 Q24 8 20 14 L14 18 Q8 10 5 0 Z" fill="#5a3416"/><path d="M16 0 H22 Q26 8 30 20 L24 22 L18 26 L12 30 L10 22 L14 18 Q20 12 18 6 Z" fill="#b88a50"/><path d="M18 8 L22 12 L20 18 L24 20 L18 22 L16 16 Z" fill="#f0dca8"/><path d="M14 20 L20 24 L14 27 Z" fill="#e8c890"/><path d="M20 1 L25 2 L22 6 Z" fill="#e8d0a0"/><path d="M12 16 L16 20 L14 24 L10 22 Z" fill="#6a4420"/><path d="M22 16 L28 18 L26 20 Z" fill="#5a3a1c"/></g></svg>
<div class="a" style="left:399.0px;top:351.70px;width:31.0px;height:8.14px;background:#1e1e1e"></div>
<div class="t" style="left:400.2px;top:354.57px;font-size:3.9px;color:#9a9a9a;line-height:1">Variant</div>
<div class="a" style="left:430.0px;top:351.70px;width:121.5px;height:8.14px;background:#1e1e1e"></div>
<div class="t" style="left:430.0px;top:354.47px;font-size:4.2px;color:#e8e8e8">Sampler</div>
<svg class="a" style="left:548.40px;top:355.27px;overflow:visible" width="3.20" height="2.80"><polygon points="0,0 2.20,0 1.10,1.80" fill="#ddd"/></svg>
<div class="a" style="left:399.0px;top:359.84px;width:31.0px;height:8.14px;background:#1e1e1e"></div>
<div class="t" style="left:400.2px;top:362.71px;font-size:3.9px;color:#9a9a9a;line-height:1">Wrap S / T</div>
<div class="a" style="left:430.0px;top:359.84px;width:121.5px;height:8.14px;background:#1e1e1e"></div>
<div class="t" style="left:430.0px;top:362.61px;font-size:4.2px;color:#e8e8e8">CLAMP</div>
<svg class="a" style="left:487.50px;top:363.51px;overflow:visible" width="3.00" height="2.60"><polygon points="0,0 2.00,0 1.00,1.60" fill="#ddd"/></svg>
<div class="t" style="left:491.0px;top:362.61px;font-size:4.2px;color:#e8e8e8">CLAMP</div>
<svg class="a" style="left:548.40px;top:363.41px;overflow:visible" width="3.20" height="2.80"><polygon points="0,0 2.20,0 1.10,1.80" fill="#ddd"/></svg>
<div class="a" style="left:399.0px;top:367.98px;width:31.0px;height:8.14px;background:#1e1e1e"></div>
<div class="t" style="left:400.2px;top:370.85px;font-size:3.9px;color:#9a9a9a;line-height:1">Filter - / +</div>
<div class="a" style="left:430.0px;top:367.98px;width:121.5px;height:8.14px;background:#1e1e1e"></div>
<div class="t" style="left:430.0px;top:370.75px;font-size:4.2px;color:#e8e8e8">LINEAR</div>
<svg class="a" style="left:487.50px;top:371.65px;overflow:visible" width="3.00" height="2.60"><polygon points="0,0 2.00,0 1.00,1.60" fill="#ddd"/></svg>
<div class="t" style="left:491.0px;top:370.75px;font-size:4.2px;color:#e8e8e8">LINEAR</div>
<svg class="a" style="left:548.40px;top:371.55px;overflow:visible" width="3.20" height="2.80"><polygon points="0,0 2.20,0 1.10,1.80" fill="#ddd"/></svg>
<div class="a" style="left:399.0px;top:376.12px;width:146.0px;height:8.14px;background:#3d5453"></div>
<svg class="a" style="left:405.10px;top:379.79px;overflow:visible" width="3.20" height="2.80"><polygon points="0,0 2.20,0 1.10,1.80" fill="#ddd"/></svg>
<div class="t" style="left:408.5px;top:378.84px;font-size:4.3px;color:#ddd">Texture</div>
<div class="a" style="left:545px;top:376.12px;width:6.5px;height:8.14px;background:#3a1a1a"></div>
<svg class="a" style="left:546.90px;top:379.39px;overflow:visible" width="3.60" height="3.20"><polygon points="1.30,0 2.60,2.20 0,2.20" fill="#e8e8e8"/></svg>
<div class="a" style="left:399.0px;top:384.26px;width:31.0px;height:8.14px;background:#1e1e1e"></div>
<div class="t" style="left:400.2px;top:387.13px;font-size:3.9px;color:#9a9a9a;line-height:1">Variable</div>
<div class="a" style="left:430.0px;top:384.26px;width:61.0px;height:8.14px;background:#262626"></div>
<div class="a" style="left:491.0px;top:384.26px;width:60.5px;height:8.14px;background:#1c1c1c"></div>
<div class="t" style="left:442.0px;width:40px;text-align:center;top:387.03px;font-size:4.2px;color:#e8e8e8">Sampler</div>
<div class="t" style="left:511.0px;width:40px;text-align:right;top:387.03px;font-size:4.2px;color:#e8e8e8">image</div>
<div class="a" style="left:399.0px;top:392.40px;width:31.0px;height:8.14px;background:#1e1e1e"></div>
<div class="t" style="left:400.2px;top:395.27px;font-size:3.9px;color:#9a9a9a;line-height:1">File</div>
<div class="a" style="left:430.0px;top:392.40px;width:121.5px;height:8.14px;background:#1e1e1e"></div>
<div class="t" style="left:422.0px;width:120px;text-align:right;top:395.17px;font-size:4.2px;color:#e8e8e8">/Users/thomas/Desktop/arabella/assets/image1.jpg</div>
<div class="a" style="left:544.0px;top:392.40px;width:7.0px;height:8.14px;background:#262626"></div>
<div class="a" style="left:399.0px;top:400.54px;width:31.0px;height:8.14px;background:#1e1e1e"></div>
<div class="t" style="left:400.2px;top:403.41px;font-size:3.9px;color:#9a9a9a;line-height:1">Resolution</div>
<div class="a" style="left:430.0px;top:400.54px;width:121.5px;height:8.14px;background:#1e1e1e"></div>
<div class="t" style="left:449.0px;width:40px;text-align:right;top:403.31px;font-size:4.2px;color:#e8e8e8">1200</div>
<div class="t" style="left:511.0px;width:40px;text-align:right;top:403.31px;font-size:4.2px;color:#e8e8e8">1800</div>
<div class="a" style="left:399.0px;top:408.68px;width:31.0px;height:32.56px;background:#1e1e1e"></div>
<div class="t" style="left:400.2px;top:423.76px;font-size:3.9px;color:#9a9a9a;line-height:1">Image</div>
<div class="a" style="left:430.0px;top:408.68px;width:121.5px;height:32.56px;background:#000"></div>
<svg class="a" style="left:479.4px;top:408.68px" width="21.5" height="32.2" viewBox="0 0 21.5 32.2"><defs><filter id="wb" x="-20%" y="-20%" width="140%" height="140%"><feGaussianBlur stdDeviation="0.8"/></filter></defs><rect width="21.5" height="32.2" fill="#5a8ac8"/><g filter="url(#wb)"><rect x="-2" y="-2" width="26" height="9" fill="#e8aaa4"/><path d="M6 2 L14 2 L13 7 L7 7 Z" fill="#f0dcd8"/><ellipse cx="11.5" cy="18" rx="7.5" ry="11" fill="#7a4a32"/><ellipse cx="12" cy="20" rx="5" ry="6" fill="#9a6244"/><path d="M1 12 L5 12 L6 26 L2 24 Z" fill="#40a898"/><path d="M12 26 L20 24 L21 33 L10 33 Z" fill="#7aa850"/><path d="M-1 28 L8 27 L8 33 L-1 33 Z" fill="#5a8ac8"/></g></svg>
<div class="a" style="left:399.0px;top:441.24px;width:31.0px;height:8.14px;background:#1e1e1e"></div>
<div class="t" style="left:400.2px;top:444.11px;font-size:3.9px;color:#9a9a9a;line-height:1">Variant</div>
<div class="a" style="left:430.0px;top:441.24px;width:121.5px;height:8.14px;background:#1e1e1e"></div>
<div class="t" style="left:430.0px;top:444.01px;font-size:4.2px;color:#e8e8e8">Sampler</div>
<svg class="a" style="left:548.40px;top:444.81px;overflow:visible" width="3.20" height="2.80"><polygon points="0,0 2.20,0 1.10,1.80" fill="#ddd"/></svg>
<div class="a" style="left:399.0px;top:449.38px;width:31.0px;height:8.14px;background:#1e1e1e"></div>
<div class="t" style="left:400.2px;top:452.25px;font-size:3.9px;color:#9a9a9a;line-height:1">Wrap S / T</div>
<div class="a" style="left:430.0px;top:449.38px;width:121.5px;height:8.14px;background:#1e1e1e"></div>
<div class="t" style="left:430.0px;top:452.15px;font-size:4.2px;color:#e8e8e8">CLAMP</div>
<svg class="a" style="left:487.50px;top:453.05px;overflow:visible" width="3.00" height="2.60"><polygon points="0,0 2.00,0 1.00,1.60" fill="#ddd"/></svg>
<div class="t" style="left:491.0px;top:452.15px;font-size:4.2px;color:#e8e8e8">CLAMP</div>
<svg class="a" style="left:548.40px;top:452.95px;overflow:visible" width="3.20" height="2.80"><polygon points="0,0 2.20,0 1.10,1.80" fill="#ddd"/></svg>
<div class="a" style="left:399.0px;top:457.52px;width:31.0px;height:8.14px;background:#1e1e1e"></div>
<div class="t" style="left:400.2px;top:460.39px;font-size:3.9px;color:#9a9a9a;line-height:1">Filter - / +</div>
<div class="a" style="left:430.0px;top:457.52px;width:121.5px;height:8.14px;background:#1e1e1e"></div>
<div class="t" style="left:430.0px;top:460.29px;font-size:4.2px;color:#e8e8e8">LINEAR</div>
<svg class="a" style="left:487.50px;top:461.19px;overflow:visible" width="3.00" height="2.60"><polygon points="0,0 2.00,0 1.00,1.60" fill="#ddd"/></svg>
<div class="t" style="left:491.0px;top:460.29px;font-size:4.2px;color:#e8e8e8">LINEAR</div>
<svg class="a" style="left:548.40px;top:461.09px;overflow:visible" width="3.20" height="2.80"><polygon points="0,0 2.20,0 1.10,1.80" fill="#ddd"/></svg>
<div class="a" style="left:399.0px;top:41.48px;width:152.5px;height:0.9px;background:#0e0e0e"></div>
<div class="a" style="left:399.0px;top:49.62px;width:152.5px;height:0.9px;background:#0e0e0e"></div>
<div class="a" style="left:399.0px;top:57.76px;width:152.5px;height:0.9px;background:#0e0e0e"></div>
<div class="a" style="left:399.0px;top:82.18px;width:152.5px;height:0.9px;background:#0e0e0e"></div>
<div class="a" style="left:399.0px;top:90.32px;width:152.5px;height:0.9px;background:#0e0e0e"></div>
<div class="a" style="left:399.0px;top:98.46px;width:152.5px;height:0.9px;background:#0e0e0e"></div>
<div class="a" style="left:399.0px;top:106.60px;width:152.5px;height:0.9px;background:#0e0e0e"></div>
<div class="a" style="left:399.0px;top:114.74px;width:152.5px;height:0.9px;background:#0e0e0e"></div>
<div class="a" style="left:399.0px;top:131.02px;width:152.5px;height:0.9px;background:#0e0e0e"></div>
<div class="a" style="left:399.0px;top:139.16px;width:152.5px;height:0.9px;background:#0e0e0e"></div>
<div class="a" style="left:399.0px;top:147.30px;width:152.5px;height:0.9px;background:#0e0e0e"></div>
<div class="a" style="left:399.0px;top:163.58px;width:152.5px;height:0.9px;background:#0e0e0e"></div>
<div class="a" style="left:399.0px;top:171.72px;width:152.5px;height:0.9px;background:#0e0e0e"></div>
<div class="a" style="left:399.0px;top:179.86px;width:152.5px;height:0.9px;background:#0e0e0e"></div>
<div class="a" style="left:399.0px;top:188.00px;width:152.5px;height:0.9px;background:#0e0e0e"></div>
<div class="a" style="left:399.0px;top:196.14px;width:152.5px;height:0.9px;background:#0e0e0e"></div>
<div class="a" style="left:399.0px;top:204.28px;width:152.5px;height:0.9px;background:#0e0e0e"></div>
<div class="a" style="left:399.0px;top:220.56px;width:152.5px;height:0.9px;background:#0e0e0e"></div>
<div class="a" style="left:399.0px;top:253.12px;width:152.5px;height:0.9px;background:#0e0e0e"></div>
<div class="a" style="left:399.0px;top:261.26px;width:152.5px;height:0.9px;background:#0e0e0e"></div>
<div class="a" style="left:399.0px;top:269.40px;width:152.5px;height:0.9px;background:#0e0e0e"></div>
<div class="a" style="left:399.0px;top:277.54px;width:152.5px;height:0.9px;background:#0e0e0e"></div>
<div class="a" style="left:399.0px;top:285.68px;width:152.5px;height:0.9px;background:#0e0e0e"></div>
<div class="a" style="left:399.0px;top:301.96px;width:152.5px;height:0.9px;background:#0e0e0e"></div>
<div class="a" style="left:399.0px;top:310.10px;width:152.5px;height:0.9px;background:#0e0e0e"></div>
<div class="a" style="left:399.0px;top:318.24px;width:152.5px;height:0.9px;background:#0e0e0e"></div>
<div class="a" style="left:399.0px;top:350.80px;width:152.5px;height:0.9px;background:#0e0e0e"></div>
<div class="a" style="left:399.0px;top:358.94px;width:152.5px;height:0.9px;background:#0e0e0e"></div>
<div class="a" style="left:399.0px;top:367.08px;width:152.5px;height:0.9px;background:#0e0e0e"></div>
<div class="a" style="left:399.0px;top:375.22px;width:152.5px;height:0.9px;background:#0e0e0e"></div>
<div class="a" style="left:399.0px;top:391.50px;width:152.5px;height:0.9px;background:#0e0e0e"></div>
<div class="a" style="left:399.0px;top:399.64px;width:152.5px;height:0.9px;background:#0e0e0e"></div>
<div class="a" style="left:399.0px;top:407.78px;width:152.5px;height:0.9px;background:#0e0e0e"></div>
<div class="a" style="left:399.0px;top:440.34px;width:152.5px;height:0.9px;background:#0e0e0e"></div>
<div class="a" style="left:399.0px;top:448.48px;width:152.5px;height:0.9px;background:#0e0e0e"></div>
<div class="a" style="left:399.0px;top:456.62px;width:152.5px;height:0.9px;background:#0e0e0e"></div>
<div class="a" style="left:399.0px;top:464.76px;width:152.5px;height:0.9px;background:#0e0e0e"></div>
<div class="a" style="left:437px;top:172.52px;width:114.5px;height:23.52px;background:#2e2e2e"></div>
<div class="a" style="left:557.4px;top:8px;width:275px;height:279.6px;border-radius:3px;background:#000;overflow:hidden;box-shadow:0 1px 8px rgba(0,0,50,.35)">
<div class="a" style="left:0;top:0;width:100%;height:9.1px;background:#ededf3"></div>
<div class="a" style="left:2.1px;top:2.4px;width:4.2px;height:4.2px;border-radius:50%;background:#c4c4ca;border:0.5px solid #b0b0b8"></div>
<div class="a" style="left:8.4px;top:2.4px;width:4.2px;height:4.2px;border-radius:50%;background:#c4c4ca;border:0.5px solid #b0b0b8"></div>
<div class="a" style="left:14.8px;top:2.4px;width:4.2px;height:4.2px;border-radius:50%;background:#c4c4ca;border:0.5px solid #b0b0b8"></div>
<div class="t" style="left:0;width:271px;text-align:center;top:2.7px;font-size:4.4px;color:#888">Output</div>
</div>
<svg class="a" style="left:647.7px;top:17.2px" width="89.7" height="271" viewBox="0 0 90 271" preserveAspectRatio="none">
<defs>
<filter id="bl" x="-10%" y="-10%" width="120%" height="120%"><feGaussianBlur stdDeviation="1.5"/></filter>
<filter id="bl2" x="-10%" y="-10%" width="120%" height="120%"><feGaussianBlur stdDeviation="1"/></filter>
<radialGradient id="face" cx="0.45" cy="0.3" r="0.8"><stop offset="0" stop-color="#98603f"/><stop offset="0.5" stop-color="#7c4a30"/><stop offset="1" stop-color="#5a3420"/></radialGradient>
<linearGradient id="neck" x1="0" y1="0" x2="0" y2="1"><stop offset="0" stop-color="#4e2c1c"/><stop offset="0.5" stop-color="#6e4028"/><stop offset="1" stop-color="#946042"/></linearGradient>
<linearGradient id="shirt" x1="0" y1="0" x2="1" y2="1"><stop offset="0" stop-color="#ec9088"/><stop offset="1" stop-color="#f4a49a"/></linearGradient>
</defs>
<rect width="90" height="271" fill="#74462e"/>
<g filter="url(#bl)">
<rect x="-5" y="-5" width="100" height="80" fill="#4a7cc8"/>
<path d="M-5 -5 H95 V2 Q80 4 66 10 Q40 16 10 19 L-5 21 Z" fill="#263e22"/>
<path d="M-5 -5 H6 Q10 8 5 18 L-5 20 Z" fill="#a08460"/>
<path d="M58 0 H95 V8 L66 58 Q60 60 55 57 Z" fill="#6a9a3e"/>
<path d="M64 6 Q74 4 80 8 L66 48 L60 48 Z" fill="#80aa50" opacity="0.8"/>
<path d="M56 14 L58.5 16 L36 34 L33.5 32 Z" fill="#24401f"/>
<path d="M22 40 Q28 33 36 36 L32 52 L22 50 Z" fill="#c4b8c8"/>
<path d="M80 14 L95 10 V60 L84 58 Q78 38 80 14 Z" fill="#96a07a"/>
<path d="M82 34 Q88 38 90 52 L85 56 Q80 44 82 34 Z" fill="#dcd0cc"/>
</g>
<g filter="url(#bl2)">
<path d="M8 84 Q20 54 48 54 Q78 55 92 72 L92 150 Q60 168 22 162 L8 150 Z" fill="url(#face)"/>
<ellipse cx="28" cy="122" rx="14" ry="22" fill="#9a6244" opacity="0.5"/>
<path d="M52 56 Q58 56 60 66 L57 80 L53 78 Z" fill="#c49070" opacity="0.4"/>
<path d="M10 80 Q22 54 48 54 Q76 55 88 68" stroke="#1e1410" stroke-width="1.6" fill="none"/>
<path d="M2 88 Q8 64 24 54" stroke="#3aa898" stroke-width="2.6" fill="none"/>
<path d="M70 52 Q84 56 92 66" stroke="#3aa898" stroke-width="2.4" fill="none"/>
<path d="M16 82 Q28 75 42 78" stroke="#3e1e12" stroke-width="1.4" fill="none"/>
<path d="M70 72 Q80 69 90 74" stroke="#3e1e12" stroke-width="1.4" fill="none"/>
<path d="M20 98 Q32 91 46 95 Q34 100 20 98 Z" fill="#160804" stroke="#160804" stroke-width="1.6"/>
<path d="M70 89 Q80 84 90 87 Q80 92 70 89 Z" fill="#160804" stroke="#160804" stroke-width="1.6"/>
<ellipse cx="60" cy="99" rx="13" ry="8" fill="#7e4a2e"/>
<ellipse cx="59" cy="95" rx="6" ry="3.6" fill="#a06848"/>
<ellipse cx="54" cy="102" rx="4" ry="2.4" fill="#140604"/>
<ellipse cx="68" cy="100" rx="4" ry="2.4" fill="#140604"/>
<path d="M42 124 Q58 110 92 111 L92 118 Q66 118 45 125 Z" fill="#361410"/>
<path d="M45 125 Q68 126 92 126 L92 136 Q66 134 48 128 Z" fill="#663222"/>
<path d="M74 97 L92 93 L92 97 L76 101 Z" fill="#2a1208" opacity="0.7"/>
<path d="M70 108 L92 102 L92 106 L72 112 Z" fill="#2a1208" opacity="0.5"/>
<path d="M74 146 L92 140 L92 144 L76 150 Z" fill="#2a1208" opacity="0.5"/>
<path d="M72 139 L92 133 L92 138 L74 143 Z" fill="#2a1208" opacity="0.6"/>
<path d="M66 151 Q80 143 92 141 L92 147 Q80 151 68 155 Z" fill="#2a1208" opacity="0.6"/>
<path d="M10 150 Q40 166 92 148 L92 240 L10 240 Z" fill="url(#neck)"/>
<path d="M40 158 Q72 146 92 138 L92 196 Q72 180 44 166 Z" fill="#3a2014" opacity="0.55"/>
<path d="M-2 74 Q2 64 8 62 L7 76 Q5 110 10 200 L-2 200 Z" fill="#349080"/>
<path d="M3 75 L4 200" stroke="#1e3e38" stroke-width="1.2" fill="none"/>
<path d="M1 90 L3 200 M6 100 L8 198" stroke="#1c4a44" stroke-width="1" fill="none"/>
<path d="M0 64 L6 62 L5 74 L-1 74 Z" fill="#c8a860"/>
<path d="M11 120 L16 118 Q20 170 24 200 L17 200 Q12 170 11 120 Z" fill="#1a100a"/>
<ellipse cx="11" cy="150" rx="3" ry="6" fill="#a87050"/>
<path d="M-5 196 Q20 194 50 208 Q70 218 80 232 L92 236 V275 H-5 Z" fill="url(#shirt)"/>
<path d="M12 206 Q32 210 52 220 L48 223 Q30 215 14 209 Z" fill="#a83c3c"/>
<path d="M8 235 L42 233 Q38 250 44 271 H16 Q12 250 8 235 Z" fill="#eadcd8"/>
<path d="M-5 244 Q6 250 12 271 H-5 Z" fill="#ec9088"/>
</g>
</svg>
</body></html>
